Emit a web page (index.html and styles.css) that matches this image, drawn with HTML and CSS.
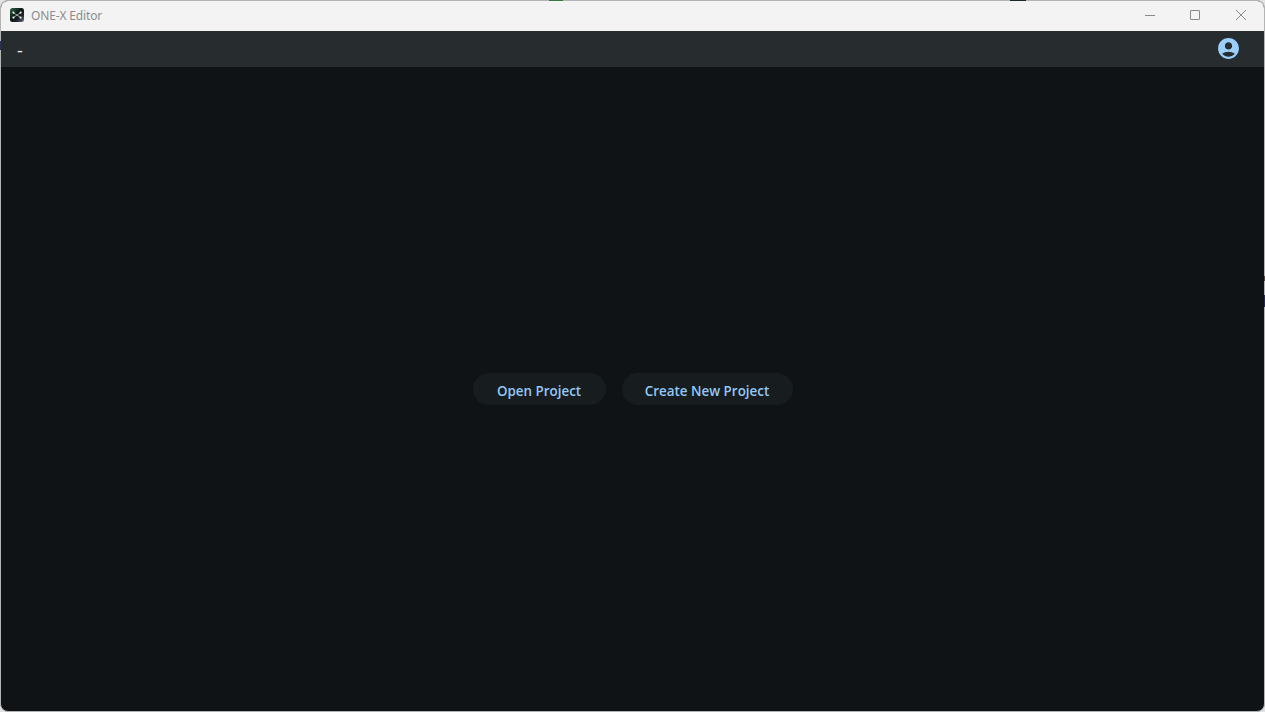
FILE: index.html
```html
<!DOCTYPE html>
<html lang="en">
<head>
    <meta charset="UTF-8">
    <meta name="viewport" content="width=device-width, initial-scale=1.0">
    <title>ONE-X Editor</title>
    <link rel="stylesheet" href="styles.css">
</head>
<body>
    <div class="window">
        <header class="titlebar">
            <svg class="logo" width="14" height="14" viewBox="0 0 14 14">
                <defs>
                    <linearGradient id="logo-bg" x1="0" y1="0" x2="1" y2="1">
                        <stop offset="0" stop-color="#2d6a4c" />
                        <stop offset="0.45" stop-color="#0b1614" />
                        <stop offset="0.7" stop-color="#20232c" />
                        <stop offset="1" stop-color="#77748c" />
                    </linearGradient>
                </defs>
                <rect width="14" height="14" rx="2.5" fill="url(#logo-bg)" />
                <path d="M3.2 4.6L10.8 9.6M10.8 4.6L3.2 9.6" stroke="#a9b5b3" stroke-width="0.9" />
                <g fill="#f0f5f3">
                    <circle cx="3.4" cy="4.6" r="1.1" />
                    <circle cx="10.6" cy="4.6" r="1.1" />
                    <circle cx="3.4" cy="9.6" r="1.1" />
                    <circle cx="10.6" cy="9.6" r="1.1" />
                </g>
            </svg>
            <span class="title">ONE-X Editor</span>
            <div class="controls">
                <svg width="12" height="12" viewBox="0 0 12 12"><path d="M1 6.5H11" /></svg>
                <svg width="12" height="12" viewBox="0 0 12 12"><rect x="1.5" y="1.5" width="9" height="9" rx="0.5" /></svg>
                <svg width="12" height="12" viewBox="0 0 12 12"><path d="M1 1L11 11M11 1L1 11" /></svg>
            </div>
        </header>
        <nav class="toolbar">
            <span class="project-name">-</span>
            <svg class="account" width="25" height="25" viewBox="0 0 24 24">
                <path d="M12 2C6.48 2 2 6.48 2 12s4.48 10 10 10 10-4.48 10-10S17.52 2 12 2zm0 4c1.93 0 3.5 1.57 3.5 3.5S13.93 13 12 13s-3.5-1.57-3.5-3.5S10.07 6 12 6zm0 14c-2.03 0-4.43-.82-6.14-2.88C7.55 15.8 9.68 15 12 15s4.45.8 6.14 2.12C16.43 19.18 14.03 20 12 20z" />
            </svg>
        </nav>
        <main class="start">
            <button class="button open">Open Project</button>
            <button class="button create">Create New Project</button>
        </main>
    </div>
    <!-- bits of the desktop showing around the window edge -->
    <span class="edge edge-green"></span>
    <span class="edge edge-dark"></span>
    <span class="edge edge-left"></span>
    <span class="edge edge-brown"></span>
    <span class="edge edge-blue"></span>
</body>
</html>
```
FILE: styles.css
```css
* {
    box-sizing: border-box;
    margin: 0;
    padding: 0;
}

body {
    position: relative;
    height: 100vh;
    overflow: hidden;
    background-color: #e2e2e2;
    font-family: "Open Sans", "Noto Sans", sans-serif;
}

.window {
    display: flex;
    flex-direction: column;
    height: 100vh;
    border: 1px solid #b4b4b4;
    border-radius: 8px;
    background-color: #0f1316;
    overflow: hidden;
}

.titlebar {
    display: flex;
    align-items: center;
    flex: 0 0 30px;
    padding: 0 17px 2px 9px;
    background-color: #f3f3f3;
}

.title {
    margin-left: 7px;
    padding-top: 2px;
    font-family: "Noto Sans", sans-serif;
    font-size: 12px;
    letter-spacing: -0.15px;
    line-height: 16px;
    color: #8c8c8c;
}

.controls {
    display: flex;
    gap: 34px;
    margin-left: auto;
}

.controls svg {
    fill: none;
    stroke: #8a8a8a;
    stroke-width: 1;
}

.controls svg:first-child {
    margin-right: -1px;
}

.toolbar {
    display: flex;
    align-items: center;
    justify-content: space-between;
    flex: 0 0 36px;
    padding: 0 23px 0 16px;
    background-color: #272c2f;
}

.project-name {
    padding-top: 1px;
    font-size: 18px;
    line-height: 24px;
    color: #e8ecef;
}

.account {
    margin-bottom: 1px;
    fill: #9bcefa;
}

.start {
    display: flex;
    flex: 1;
    align-items: center;
    justify-content: center;
    gap: 16px;
}

.button {
    height: 32px;
    padding-top: 4px;
    border: none;
    border-radius: 16px;
    background-color: #171c1f;
    color: #94c8f4;
    font-family: "Open Sans", sans-serif;
    font-size: 13.4px;
    font-weight: 600;
}

.open {
    width: 133px;
}

.create {
    width: 171px;
}

.edge {
    position: absolute;
}

.edge-green {
    top: 0;
    left: 549px;
    width: 14px;
    height: 1px;
    background-color: #357a45;
}

.edge-dark {
    top: 0;
    left: 1010px;
    width: 16px;
    height: 1px;
    background-color: #1c262b;
}

.edge-left {
    top: 41px;
    left: 0;
    width: 1px;
    height: 9px;
    background-color: #2b3353;
}

.edge-brown {
    top: 276px;
    right: 0;
    width: 1px;
    height: 5px;
    background-color: #55443c;
}

.edge-blue {
    top: 295px;
    right: 0;
    width: 1px;
    height: 12px;
    background-color: #26284f;
}
```
